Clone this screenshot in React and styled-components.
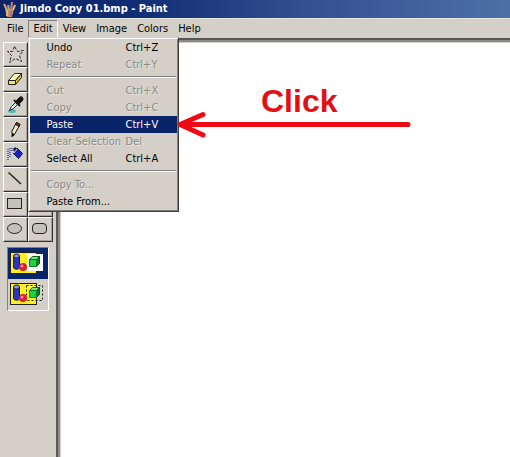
import styled, { createGlobalStyle } from "styled-components";

const GlobalStyle = createGlobalStyle`
  * {
    box-sizing: border-box;
  }

  body {
    margin: 0;
    background-color: #d4d0c8;
    font-family: "DejaVu Sans Condensed", "DejaVu Sans", sans-serif;
    font-size: 11px;
    color: #000;
  }

  button {
    font: inherit;
    color: inherit;
  }
`;

const Window = styled.div`
  display: flex;
  flex-direction: column;
  min-height: 100vh;
  overflow: hidden;
`;

const TitleBar = styled.header`
  display: flex;
  align-items: center;
  gap: 4px;
  height: 18px;
  padding-left: 3px;
  background: linear-gradient(to right, #0a246a, #0f2b72 25%, #34508f 60%, #4d70a9);
`;

const Title = styled.h1`
  margin: 0;
  font-size: 11px;
  line-height: 18px;
  font-weight: bold;
  color: #fff;
  white-space: nowrap;
`;

const MenuBar = styled.nav`
  display: flex;
  height: 20px;
  padding: 1px 0 0 2px;
  border-top: 1px solid #e4e6e0;
`;

const MenuSlot = styled.div`
  position: relative;
`;

const MenuButton = styled.button`
  display: block;
  height: 18px;
  padding: 0 4px;
  border: 1px solid;
  border-color: ${({ $open }) =>
    $open ? "#808080 #fff #fff #808080" : "transparent"};
  background: none;
  line-height: 16px;
`;

const Menu = styled.div`
  position: absolute;
  top: 17px;
  left: 0;
  z-index: 1;
  width: 151px;
  padding: 1px;
  border: 1px solid;
  border-color: #d4d0c8 #404040 #404040 #d4d0c8;
  background-color: #d4d0c8;
  box-shadow: inset 1px 1px #fff, inset -1px -1px #808080;
`;

const MenuItem = styled.button`
  display: grid;
  grid-template-columns: 79px 1fr;
  width: 100%;
  height: 17px;
  padding: 0 0 0 16px;
  border: none;
  background-color: ${({ $active }) => ($active ? "#0a246a" : "transparent")};
  color: ${({ $active }) => ($active ? "#fff" : "#000")};
  line-height: 17px;
  text-align: left;
  white-space: nowrap;

  &:disabled {
    color: #8c8a85;
    text-shadow: 1px 1px #e8e5df;
  }
`;

const Separator = styled.hr`
  height: 2px;
  margin: 3px 1px 4px;
  border: none;
  border-top: 1px solid #808080;
  border-bottom: 1px solid #fff;
`;

const Workspace = styled.main`
  display: flex;
  flex: 1;
`;

const Toolbox = styled.aside`
  width: 56px;
  flex-shrink: 0;
  padding: 4px 3px;
`;

const Tools = styled.div`
  display: grid;
  grid-template-columns: 25px 25px;
  grid-auto-rows: 25px;
`;

const ToolButton = styled.button`
  padding: 0;
  border: 1px solid;
  border-color: #fff #303030 #303030 #fff;
  background-color: #d4d0c8;
  box-shadow: inset -1px -1px #a8a49c;

  svg {
    display: block;
  }
`;

const Options = styled.div`
  display: flex;
  flex-direction: column;
  width: 42px;
  margin: 5px 0 0 4px;
  border: 1px solid;
  border-color: #808080 #fff #fff #808080;
`;

const OptionButton = styled.button`
  height: 31px;
  padding: 0;
  border: none;
  background-color: ${({ $selected }) => ($selected ? "#0a246a" : "transparent")};

  svg {
    display: block;
  }
`;

const Canvas = styled.section`
  position: relative;
  flex: 1;
  min-width: 0;
  border: solid #575757;
  border-width: 2px 0 0 2px;
  box-shadow: inset 2px 2px #8a8a8a, inset 3px 3px #d4d0c8;
  background-color: #fff;
`;

const ClickText = styled.span`
  position: absolute;
  top: 42px;
  left: 203px;
  font-family: "Liberation Sans", Arial, sans-serif;
  font-size: 32px;
  line-height: 38px;
  font-weight: bold;
  color: #e30f14;
`;

const Arrow = styled.svg`
  position: absolute;
  top: 70px;
  left: 118px;
  z-index: 2;
`;

function PaintIcon() {
  return (
    <svg width="13" height="16" viewBox="0 0 13 16">
      <path d="M2 8h9l-2 8H4z" fill="#c98a63" />
      <path d="M4 9v6" stroke="#e8b06a" strokeWidth="2" />
      <path d="M8 10v5" stroke="#8f79b8" strokeWidth="2" />
      <path d="M4 9L1 3" stroke="#f09a45" strokeWidth="2" />
      <path d="M6 9L5 4" stroke="#6cc0c8" strokeWidth="2" />
      <path d="M8 9l1-8" stroke="#e2776a" strokeWidth="2" />
      <path d="M10 9l2-5" stroke="#f0c861" strokeWidth="2" />
    </svg>
  );
}

const toolIcons = {
  "Free-Form Select": (
    <path
      d="M10.5 3.5L8.5 8.5 3.5 8.5 7.5 12.5 5.5 19.5 11.5 15.5 17.5 18.5 15.5 12.5 19.5 7.5 13.5 8.5z"
      fill="none"
      stroke="#222"
      strokeDasharray="3 1.5"
    />
  ),
  Select: null,
  Eraser: (
    <g stroke="#222" strokeLinejoin="round">
      <path d="M4.5 12.5L10.5 5.5H17.5L11.5 12.5z" fill="#fffdb8" />
      <path d="M4.5 12.5H11.5V16.5H4.5z" fill="#f3e36b" />
      <path d="M11.5 12.5L17.5 5.5V9.5L11.5 16.5z" fill="#d8be3c" />
    </g>
  ),
  Fill: null,
  "Pick Color": (
    <g>
      <ellipse cx="8" cy="18" rx="4" ry="2" fill="#52b6bd" />
      <path d="M5.5 17.5l2-4 5-5 2 2-5 5z" fill="#d9f4f5" stroke="#222" />
      <path d="M10 7l6 6" stroke="#111" strokeWidth="2" />
      <path d="M14 9l3-3" stroke="#111" strokeWidth="5" strokeLinecap="round" />
    </g>
  ),
  Magnifier: null,
  Pencil: (
    <g stroke="#111">
      <path
        d="M12.5 4.5l3.5 2-5 9-3 3V13z"
        fill="#f5ecd0"
        strokeLinejoin="round"
      />
      <path d="M12.5 4.5l3.5 2-1 2-3.5-2z" fill="#8c352f" />
      <path d="M8.5 15.5v3l2-2z" fill="#111" />
    </g>
  ),
  Brush: null,
  Airbrush: (
    <g>
      <path
        d="M4 6v11M6 5v9M8 5v4M10 5v2"
        stroke="#3a43b4"
        strokeWidth="1.5"
        strokeDasharray="1 1"
      />
      <path d="M9 7l2-3 3 2-3 3z" fill="#222" />
      <path d="M13.5 5.5l5 5-4 5-5-5z" fill="#1b22b8" stroke="#0b1054" />
      <path d="M10 10l3-4" stroke="#cdd0f5" />
    </g>
  ),
  Text: null,
  Line: <path d="M4.5 4.5L17 16" stroke="#222" strokeWidth="1.5" />,
  Curve: null,
  Rectangle: (
    <rect x="3.5" y="5.5" width="14" height="10" fill="#c4c1ba" stroke="#222" />
  ),
  Polygon: null,
  Ellipse: (
    <ellipse cx="10.5" cy="10.5" rx="7" ry="5" fill="#c4c1ba" stroke="#222" />
  ),
  "Rounded Rectangle": (
    <rect x="3.5" y="5.5" width="14" height="10" rx="3.5" fill="#c4c1ba" stroke="#222" />
  ),
};

function OptionIcon({ transparent }) {
  return (
    <svg width="40" height="31" viewBox="0 0 40 31">
      <rect x="2.5" y="4.5" width="26" height="21" fill="#fff21c" stroke="#222" />
      {transparent ? (
        <rect
          x="18.5"
          y="6.5"
          width="16"
          height="15"
          fill="none"
          stroke="#222"
          strokeDasharray="2 2"
        />
      ) : (
        <rect x="19" y="6" width="16" height="17" fill="#fff" />
      )}
      <path d="M5.5 8v11c0 3 6 3 6 0V8z" fill="#2a35c4" stroke="#10155c" />
      <ellipse cx="8.5" cy="8" rx="3" ry="2" fill="#8b95ee" stroke="#10155c" />
      <circle cx="15" cy="19" r="4" fill="#d81f35" />
      <circle cx="14" cy="18" r="1.5" fill="#ff8f92" />
      <path d="M21.5 11.5l3-3h7l-3 3z" fill="#74e874" stroke="#0b5a1c" />
      <path d="M28.500 11.500l3-3v7l-3 3z" fill="#0b7a22" stroke="#0b5a1c" />
      <path d="M21.5 11.5h7v7h-7z" fill="#1fd040" stroke="#0b7a22" />
    </svg>
  );
}

const editItems = [
  { label: "Undo", keys: "Ctrl+Z" },
  { label: "Repeat", keys: "Ctrl+Y", disabled: true },
  null,
  { label: "Cut", keys: "Ctrl+X", disabled: true },
  { label: "Copy", keys: "Ctrl+C", disabled: true },
  { label: "Paste", keys: "Ctrl+V", active: true },
  { label: "Clear Selection", keys: "Del", disabled: true },
  { label: "Select All", keys: "Ctrl+A" },
  null,
  { label: "Copy To...", disabled: true },
  { label: "Paste From..." },
];

const menus = ["File", "Edit", "View", "Image", "Colors", "Help"];

function EditMenu() {
  return (
    <Menu role="menu" aria-label="Edit">
      {editItems.map((item, i) =>
        item ? (
          <MenuItem
            key={item.label}
            role="menuitem"
            disabled={item.disabled}
            $active={item.active}
          >
            <span>{item.label}</span>
            <span>{item.keys}</span>
          </MenuItem>
        ) : (
          <Separator key={i} />
        )
      )}
    </Menu>
  );
}

function App() {
  return (
    <>
      <GlobalStyle />
      <Window>
        <TitleBar>
          <PaintIcon />
          <Title>Jimdo Copy 01.bmp - Paint</Title>
        </TitleBar>
        <MenuBar>
          {menus.map((name) => (
            <MenuSlot key={name}>
              <MenuButton $open={name === "Edit"}>{name}</MenuButton>
              {name === "Edit" && <EditMenu />}
            </MenuSlot>
          ))}
        </MenuBar>
        <Workspace>
          <Toolbox>
            <Tools>
              {Object.entries(toolIcons).map(([name, icon]) => (
                <ToolButton key={name} aria-label={name}>
                  <svg width="23" height="23" viewBox="0 0 23 23">
                    {icon}
                  </svg>
                </ToolButton>
              ))}
            </Tools>
            <Options>
              <OptionButton $selected aria-label="Opaque">
                <OptionIcon />
              </OptionButton>
              <OptionButton aria-label="Transparent">
                <OptionIcon transparent />
              </OptionButton>
            </Options>
          </Toolbox>
          <Canvas>
            <ClickText>Click</ClickText>
            <Arrow width="236" height="30" viewBox="0 0 236 30">
              <path
                d="M4 14.5H232M27 4.5L4 14.5L27 25"
                fill="none"
                stroke="#ee0a12"
                strokeWidth="5"
                strokeLinecap="round"
                strokeLinejoin="round"
              />
            </Arrow>
          </Canvas>
        </Workspace>
      </Window>
    </>
  );
}

export default App;
